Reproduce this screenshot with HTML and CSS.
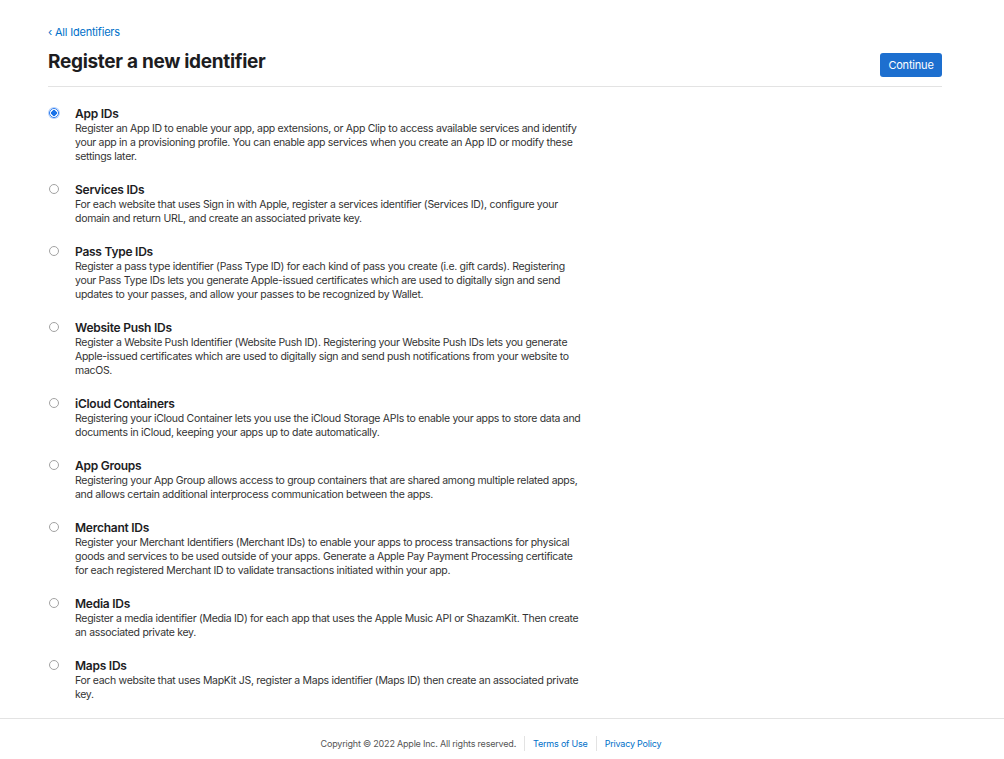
FILE: index.html
```html
<!DOCTYPE html>
<html lang="en">
<head>
    <meta charset="UTF-8">
    <title>Register a new identifier</title>
    <link rel="stylesheet" href="styles.css">
</head>
<body>
<div class="page">
    <a class="back" href="#">&lsaquo; All Identifiers</a>
    <div class="head">
        <h1>Register a new identifier</h1>
        <button type="button" class="btn">Continue</button>
    </div>
    <form class="list">
        <label class="item">
            <input type="radio" name="type" checked>
            <span class="body">
                <span class="title">App IDs</span>
                <span class="desc">Register an App ID to enable your app, app extensions, or App Clip to access available services and identify your app in a provisioning profile. You can enable app services when you create an App ID or modify these settings later.</span>
            </span>
        </label>
        <label class="item">
            <input type="radio" name="type">
            <span class="body">
                <span class="title">Services IDs</span>
                <span class="desc">For each website that uses Sign in with Apple, register a services identifier (Services ID), configure your domain and return URL, and create an associated private key.</span>
            </span>
        </label>
        <label class="item">
            <input type="radio" name="type">
            <span class="body">
                <span class="title">Pass Type IDs</span>
                <span class="desc">Register a pass type identifier (Pass Type ID) for each kind of pass you create (i.e. gift cards). Registering your Pass Type IDs lets you generate Apple-issued certificates which are used to digitally sign and send updates to your passes, and allow your passes to be recognized by Wallet.</span>
            </span>
        </label>
        <label class="item">
            <input type="radio" name="type">
            <span class="body">
                <span class="title">Website Push IDs</span>
                <span class="desc">Register a Website Push Identifier (Website Push ID). Registering your Website Push IDs lets you generate Apple-issued certificates which are used to digitally sign and send push notifications from your website to macOS.</span>
            </span>
        </label>
        <label class="item">
            <input type="radio" name="type">
            <span class="body">
                <span class="title">iCloud Containers</span>
                <span class="desc">Registering your iCloud Container lets you use the iCloud Storage APIs to enable your apps to store data and documents in iCloud, keeping your apps up to date automatically.</span>
            </span>
        </label>
        <label class="item">
            <input type="radio" name="type">
            <span class="body">
                <span class="title">App Groups</span>
                <span class="desc">Registering your App Group allows access to group containers that are shared among multiple related apps, and allows certain additional interprocess communication between the apps.</span>
            </span>
        </label>
        <label class="item">
            <input type="radio" name="type">
            <span class="body">
                <span class="title">Merchant IDs</span>
                <span class="desc">Register your Merchant Identifiers (Merchant IDs) to enable your apps to process transactions for physical goods and services to be used outside of your apps. Generate a Apple Pay Payment Processing certificate for each registered Merchant ID to validate transactions initiated within your app.</span>
            </span>
        </label>
        <label class="item">
            <input type="radio" name="type">
            <span class="body">
                <span class="title">Media IDs</span>
                <span class="desc">Register a media identifier (Media ID) for each app that uses the Apple Music API or ShazamKit. Then create an associated private key.</span>
            </span>
        </label>
        <label class="item">
            <input type="radio" name="type">
            <span class="body">
                <span class="title">Maps IDs</span>
                <span class="desc">For each website that uses MapKit JS, register a Maps identifier (Maps ID) then create an associated private key.</span>
            </span>
        </label>
    </form>
</div>
<footer class="footer">
    <span class="copy">Copyright &copy; 2022 Apple Inc. All rights reserved.</span>
    <a href="#">Terms of Use</a>
    <a href="#">Privacy Policy</a>
</footer>
</body>
</html>
```

FILE: styles.css
```css
body { margin: 0; font-family: Inter, "Noto Sans", sans-serif; color: #1d1d1f; background: #fff; }
.page { width: 894px; margin: 0 0 0 48px; padding-top: 20px; }
.back { display: inline-block; font-size: 11px; letter-spacing: -0.2px; color: #0070c9; text-decoration: none; line-height: 14px; }
.head { display: flex; justify-content: space-between; align-items: center; margin-top: 6px; padding-bottom: 9px; border-bottom: 1px solid #e3e3e3; }
h1 { margin: 0; font-size: 19px; font-weight: 700; letter-spacing: -0.3px; line-height: 26px; }
.btn { margin-top: 7px; background: #1d6fcf; color: #fff; border: none; border-radius: 3px; font-family: inherit; font-size: 11px; letter-spacing: -0.2px; padding: 0; height: 24px; width: 62px; }
.list { padding-top: 19px; }
.item { display: flex; align-items: flex-start; margin-bottom: 19px; }
.item input { appearance: none; margin: 2px 16px 0 1px; width: 10px; height: 10px; flex: none; border: 1px solid #a3a3a3; border-radius: 50%; background: #fff; }
.item input:checked { border-color: #2b7cf0; background: radial-gradient(circle, #1a73e8 0 2.6px, #fff 3px); box-shadow: 0 0 0 1px #b9d3fb; }
.body { display: flex; flex-direction: column; width: 512px; }
.title { font-size: 12px; font-weight: 600; letter-spacing: -0.25px; line-height: 15px; }
.desc { margin-top: 1px; margin-bottom: -1px; font-size: 10.5px; letter-spacing: -0.3px; line-height: 14px; color: #333; }
.footer { border-top: 1px solid #e3e3e3; margin-top: -2px; padding: 17px 14px 20px 0; display: flex; justify-content: center; align-items: center; font-size: 9px; letter-spacing: -0.2px; }
.copy { color: #555; padding-right: 8px; }
.footer a { color: #0070c9; text-decoration: none; border-left: 1px solid #e3e3e3; padding: 2px 8px; }
```
